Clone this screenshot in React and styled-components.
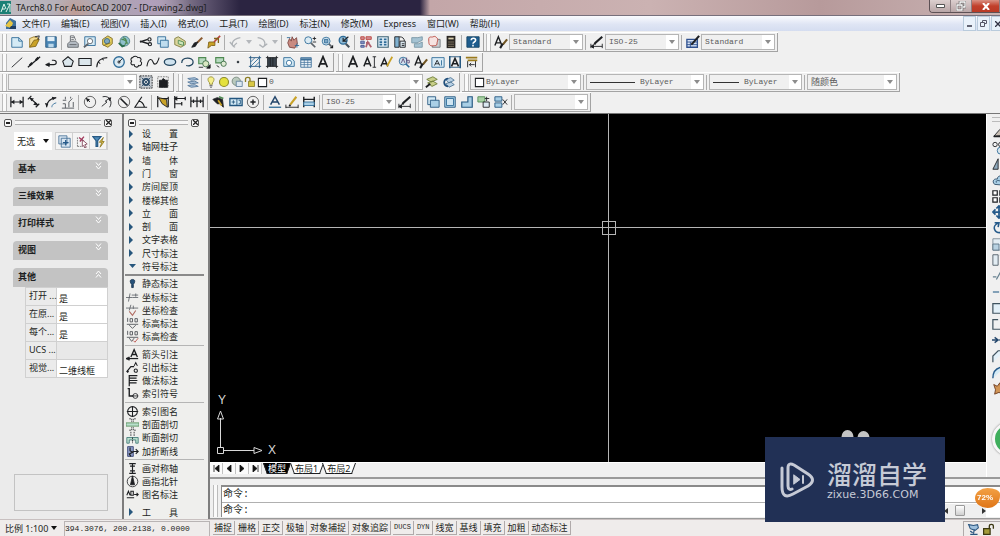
import React from 'react'
import styled, { createGlobalStyle } from 'styled-components'

const Face = "#f0f0f0";
const Edge = "#a3a3a3";
const Ink = "#1d1f22";
const Blue = "#2f6c98";
const Sky = "#a9cfe6";
const Green = "#4f8a52";
const Gold = "#c9a227";
const Red = "#b8453c";
const UiFont = `"Noto Sans", "Noto Sans CJK SC", sans-serif`;
const MonoFont = `"Liberation Mono", "Noto Sans CJK SC", monospace`;

const GlobalStyle = createGlobalStyle`
  * { box-sizing: border-box; }
  body { margin: 0; background: ${Face}; overflow: hidden; }
  button, select, input { font: inherit; color: inherit; margin: 0; padding: 0; border: 0; background: none; border-radius: 0; }
`

/* ---------- icons, all on a 16 x 16 grid ---------- */

const icons = {
  newFile: <><path d="M2 3h8l4 4v7H2z" fill="#d4eaf5" stroke={Blue} /><path d="M10 3v4h4" stroke={Blue} /></>,
  open: <><path d="M3 14V4l5-2 4 1v3" fill="#f3dc92" stroke="#9a7b2b" /><path d="M3 14l5-8 6-1-4 8z" fill={Gold} stroke="#7f641c" /><path d="M9 2l5-1-1 4" stroke={Ink} /></>,
  save: <><path d="M2 2h12v12H2z" fill="#4b86b5" stroke="#27587f" /><path d="M4 2h8v5H4z" fill="#e2eff7" stroke="none" /><path d="M5 10h6v4H5z" fill="#bcd8ea" stroke="none" /></>,
  print: <><path d="M5 7V1h4l2 5" fill="#fff" stroke="#5b6066" /><path d="M2 10l3-3h6l3 3v4H2z" fill="#b3bac2" stroke="#5b6066" /><path d="M4 11h8M6 3h3M6 5h3" stroke="#5b6066" /></>,
  preview: <><path d="M2 2h12v10H2z" fill="#d4eaf5" stroke={Blue} /><circle cx="8" cy="7" r="3" fill="#fff" stroke="#5d646b" /><path d="M6 10l-5 4" strokeWidth="2" stroke="#5d646b" /></>,
  publish: <><path d="M3 5l6-4 5 3v6l-5 4-6-3z" fill="#e5cf5f" stroke="#7f6a22" /><circle cx="8" cy="7" r="3" fill="#7fa7bd" stroke="#3b6986" /><path d="M4 12l8-3" stroke="#7f6a22" /></>,
  web: <><circle cx="9" cy="7" r="5.500" fill="#8fc0cb" stroke="#4f7f86" /><path d="M7 3c4 1 5 5 2 8M5 5c3 0 6 2 7 5" stroke={Green} strokeWidth="1.500" /><path d="M2 9l4 4 3-1" stroke="#276b4a" strokeWidth="2" /></>,
  cut: <><path d="M1 8l9-3M1 7l10 3" strokeWidth="1.600" /><circle cx="12" cy="5" r="1.800" strokeWidth="1.300" /><circle cx="12.500" cy="10.500" r="1.800" strokeWidth="1.300" /></>,
  copy: <><path d="M2 2h9v8H2z" fill="#d4eaf5" stroke={Blue} /><path d="M5 6h9v8H5z" fill="#bedcee" stroke={Blue} /></>,
  paste: <><path d="M2 4l4-2 8 5v4l-5 3-7-3z" fill="#dcd59c" stroke="#7d7a3c" /><path d="M6 6l6 2v4l-6-2z" fill="#cfe5bb" stroke={Green} /></>,
  brush: <><path d="M14 3L8 9" stroke="#8a5a2f" strokeWidth="2.400" /><path d="M9 8l-3 5-4 1 3-5z" fill={Ink} /></>,
  blockEdit: <><path d="M2 8h7v4H5l-4 3z" fill={Gold} stroke="#7f641c" /><path d="M15 1L8 8" stroke={Red} strokeWidth="2" /><path d="M8 4h5v5" stroke="#7f641c" strokeWidth="1.500" /></>,
  undo: <path d="M7 14c-5-2-5-9 6-11M1 8l4 5 4-4" stroke="#aeb2b6" strokeWidth="1.500" />,
  redo: <path d="M3 3c9 1 10 8 6 11M5 11l4 3 5-4" stroke="#aeb2b6" strokeWidth="1.500" />,
  pan: <><path d="M4 14L2 9l2-5 2 3 1-5 2 4 3-3 1 7-3 5z" fill="#c98b82" stroke="#7b4540" /><path d="M10 12h5M12.500 9.500v5M1 3h4" stroke={Blue} /></>,
  zoomRt: <><circle cx="6" cy="6" r="4" fill="#dcebf3" stroke={Blue} /><path d="M9 9l5 5" strokeWidth="2" stroke="#5d646b" /><path d="M11 4h4M13 2v4M11 8h4" /></>,
  zoomWin: <><circle cx="7" cy="7" r="4.500" fill="#dcebf3" stroke={Blue} /><path d="M5 5h4v4H5z" fill="#7fa7c4" stroke={Blue} /><path d="M10 10l3 3" strokeWidth="2" stroke="#5d646b" /><path d="M15 11v4h-4z" fill={Ink} stroke="none" /></>,
  zoomPrev: <><circle cx="7" cy="6" r="4.500" fill="#8dbad6" stroke={Blue} strokeWidth="1.500" /><path d="M10 10l4 4" strokeWidth="2.500" stroke="#46525c" /><path d="M13 2L7 7V3M7 7h4" stroke={Ink} strokeWidth="1.300" /></>,
  properties: <><path d="M2 2h4v3H2zM8 2h6v3H8z" fill="#d58d97" stroke={Red} /><path d="M2 7h4v3H2zM2 12h4v2H2z" fill="#7f8fc0" stroke="#4a5a93" /><path d="M8 14l2-6 4 6M8 9h4" stroke="#b0616e" strokeWidth="2" /></>,
  center: <><path d="M2 2h12v12H2z" fill="#deedf6" stroke="#3f6476" strokeWidth="1.300" /><path d="M4 5h3M9 5h3M4 8h3M9 8h3M4 11h3M9 11h3" stroke={Blue} strokeWidth="2" /></>,
  palettes: <><path d="M2 2h5v12H2z" fill="#7fb0cf" stroke={Ink} /><path d="M7 2c4 0 6 2 6 5" /><path d="M8 7h6v7H8z" fill="#dbe8f0" stroke={Ink} /><path d="M10 10h3M10 12h3" /></>,
  sheet: <path d="M2 3h7l5-1v4l-6 3H2zM5 10h5l4-2v6H5z" fill="#a5c3d3" stroke="#7896a5" />,
  markup: <><path d="M6 5h9v9H6z" fill="#c9ced2" stroke="#72797f" /><path d="M2 4c1-3 3-1 5-2s3 0 4 1 2 2 1 4 0 5-2 5-4 1-6 0-2-3-2-8z" stroke={Red} fill="#f6e3e1" /></>,
  calc: <><path d="M3 1h10v14H3z" fill="#2a2623" stroke="none" /><path d="M5 3h6v2H5z" fill="#d8cfae" stroke="none" /><path d="M5 8h6M5 10.500h6M5 13h6" stroke="#b9a98a" strokeDasharray="1.500 .8" /></>,
  help: <><path d="M1 2h14v12H1z" fill="#1f5d8e" stroke="#164566" /><path d="M6 6c0-3 5-3 5 0 0 2-3 2-3 4M8 11v2" stroke="#fff" strokeWidth="1.800" /></>,

  textStyle: <><path d="M1 12L5 2l4 10M2 9h6" strokeWidth="1.600" /><path d="M15 5l-5 6" stroke="#6f5320" strokeWidth="2.400" /><path d="M10 10l-3 5" strokeWidth="2.400" /></>,
  dimStyle: <><path d="M1 13h13M1 10v5M14 10v5M1 13l3-2v4z" fill={Ink} /><path d="M14 2L6 9l-1 2" strokeWidth="2.400" stroke={Ink} /></>,
  tableStyle: <><path d="M1 5h12v9H1z" fill="#d5e2f4" stroke="#30518f" strokeWidth="1.500" /><path d="M1 8h12M1 11h12M5 8v6" stroke="#30518f" /><path d="M15 1L8 9l-2 2" strokeWidth="2.400" /></>,

  line: <path d="M2 14L14 3" />,
  xline: <><path d="M1 14L15 2" strokeWidth="1.500" /><path d="M3 12l3-3M10 6l3-3" strokeWidth="2.500" /></>,
  polyline: <><path d="M2 11h9c4 0 4-5 0-5H9" strokeWidth="1.300" /><path d="M2 11l4-2v4z" fill={Ink} /></>,
  polygon: <path d="M8 2l6 5-2 6H4L2 7z" fill="#dbe6ec" strokeWidth="1.200" />,
  rect: <path d="M1 4h14v8H1z" fill="#dbe6ec" strokeWidth="1.200" />,
  arc: <path d="M2 14C2 7 7 3 14 3M4 8l2 2M8 4l2 2" strokeWidth="1.200" />,
  circle: <><circle cx="8" cy="8" r="6" stroke={Blue} fill="#dbeaf3" strokeWidth="1.500" /><path d="M8 8l4-4M6 8h4M8 6v4" /></>,
  cloud: <path d="M4 3c2-2 5-2 6 0 3-1 5 2 3 4 3 2 1 6-2 5-1 3-5 2-5-1-3 1-5-1-3-4-2-2 0-4 1-4z" strokeWidth="1.200" />,
  spline: <path d="M1 13C3 2 7 5 8 8s4 5 7-5" strokeWidth="1.200" />,
  ellipse: <ellipse cx="8" cy="8" rx="6.500" ry="3.800" fill="#cfe2ee" stroke="#23465f" strokeWidth="1.500" />,
  ellipseArc: <path d="M2 9c0-7 13-7 13-1 0 4-5 5-8 4" stroke="#23465f" strokeWidth="1.400" />,
  insertBlock: <><path d="M2 3h8v7H2z" fill="#b7d9c0" stroke={Green} strokeWidth="1.300" /><circle cx="10" cy="10" r="3.500" fill="#d9e8c4" stroke="#3b6b46" /><path d="M2 14h5M15 11v4h-4z" fill={Ink} /></>,
  makeBlock: <><path d="M2 3h9v6H2z" fill="#b7d9c0" stroke={Green} strokeWidth="1.300" /><circle cx="11" cy="10" r="3" fill="#dfe9d2" stroke="#3b6b46" /><path d="M3 12l3 2" /></>,
  point: <circle cx="8" cy="8" r="1" fill="#23465f" />,
  hatch: <><path d="M3 1v14M13 1v14M1 3h14M1 13h14" stroke="#23567f" /><path d="M3 8l5-5M3 13L13 3M8 13l5-5" stroke={Blue} /></>,
  gradient: <><path d="M3 3h10v10H3z" fill="#3b444d" stroke="none" /><path d="M3 1v14M13 1v14M1 3h14M1 13h14M6 3v10M9 3v10" stroke={Ink} /></>,
  region: <><path d="M2 3h8l4 4v6H2z" fill="#d4eaf5" stroke={Blue} /><circle cx="8" cy="9" r="3" fill="#fff" stroke={Blue} /></>,
  table: <><path d="M2 3h12v11H2z" fill="#eef4f9" stroke="#3d6f99" /><path d="M2 5h12" stroke="#3d6f99" strokeWidth="2.500" /><path d="M2 8.500h12M2 11h12M6 5v9M10 5v9" stroke="#3d6f99" strokeWidth=".8" /></>,
  letterA: <path d="M3 14L8 2l5 12M5 10h6" strokeWidth="2" />,
  textI: <><path d="M1 13L5 3l4 10M2 10h6" strokeWidth="1.600" /><path d="M11 2h4M13 2v12M11 14h4" /></>,
  textEdit: <><path d="M1 13L5 4l4 9M2 10h6" strokeWidth="1.600" /><path d="M14 2L8 13" stroke={Gold} strokeWidth="2" /></>,
  find: <><circle cx="7" cy="7" r="4.500" fill="#cfe0ec" stroke={Blue} /><path d="M10 10l4 4" strokeWidth="2" stroke={Blue} /><path d="M5 9l2-5 2 5M11 3v5M11 6h3v3h-3" stroke="#5d4a78" /></>,
  textScale: <><path d="M1 3h14v11H1z" fill="#d9ebf6" stroke={Blue} /><path d="M4 12l3-6 3 6M5 10h4" /><path d="M12 6v6" stroke={Blue} /></>,
  textJust: <><path d="M2 2h12v12H2z" stroke="#23567f" /><path d="M4 13l4-9 4 9M5 10h6" strokeWidth="1.800" /><path d="M2 1v14M14 1v14" stroke="#23567f" strokeWidth="1.500" /></>,
  spaceConv: <><path d="M1 3h13M3 6h11" stroke="#9a7a1d" strokeWidth="2" /><path d="M3 7v7M12 7v7M5 11h6M7 9l-2 2 2 2" /></>,

  gearBox: <><path d="M1 1h14v14H1z" fill="#c9ced3" stroke={Ink} strokeDasharray="2 1" /><circle cx="8" cy="8" r="3.500" stroke="#2b4a66" strokeWidth="2" /><path d="M3 3l10 10M13 3L3 13" stroke="#2b4a66" /></>,
  blackBox: <><path d="M2 2h12v12H2z" stroke="#777" strokeDasharray="2 1" /><path d="M4 6h3l1-2 3 2h2v8H4z" fill={Ink} /></>,
  layers: <path d="M2 4l8-1 4 2-8 1zM2 8l8-1 4 2-8 1zM2 12l8-1 4 2-8 1z" fill="#a7c0d8" stroke="#57799c" />,
  bulb: <><path d="M8 1c-6 1-4 6-2 8v2h4V9c2-2 4-7-2-8z" fill="#f6ef8c" stroke="#8a8227" /><path d="M6 13h4M7 15h2" /></>,
  sun: <circle cx="8" cy="8" r="6" fill="#e4e13c" stroke="#8d8b2c" strokeWidth="1.500" />,
  sunVp: <><circle cx="7" cy="7" r="5.500" fill="#b9c9bd" stroke="#67796c" /><path d="M7 7h8v7H7z" fill="#dbe7f1" stroke="#517493" /></>,
  lock: <><path d="M6 7h8v7H6z" fill="#d8c743" stroke="#7f7420" /><path d="M2 8V4c0-3 6-3 6 0v3" stroke="#8a7c22" strokeWidth="1.800" /></>,
  swatch: <path d="M2 2h12v12H2z" fill="#fff" strokeWidth="1.500" />,
  layerPrev: <><path d="M2 5l7-3 5 3-7 3zM3 9l6-2 5 3-6 3z" fill="#c8cf89" stroke="#6d7d37" /><path d="M1 14l5-4" strokeWidth="2" /></>,
  layerState: <><path d="M4 5l6-2 4 3-6 3zM4 10l6-2 4 3-6 3z" fill="#b8d0e4" stroke="#4d7393" /><path d="M7 13C1 12 1 5 7 4" stroke="#204f7c" strokeWidth="2" /></>,

  dimLinear: <><path d="M1 2v12M15 2v12M1 8h14" strokeWidth="1.400" /><path d="M1 8l4-2.500v5zM15 8l-4-2.500v5z" fill={Ink} stroke="none" /></>,
  dimAligned: <><path d="M1 5l4-4M10 14l4-4M3 3l10 9" strokeWidth="1.400" /><path d="M3 3l5 1-3 3zM12 12l-5-1 3-3z" fill={Ink} stroke="none" /></>,
  dimArc: <><path d="M3 14C3 8 7 4 14 3" strokeWidth="1.300" /><path d="M9 14c0-2 1-4 5-5" stroke={Blue} /><path d="M14 3l-5-1 1 4zM3 14l-2-5 4 1z" fill={Ink} stroke="none" /></>,
  dimOrd: <path d="M1 15h14M2 10h3v5M9 14V8l4-4M5 2v3M11 2v2M14 8v6M2 6h4" stroke="#4a4f55" />,
  dimRadius: <><circle cx="8" cy="8" r="6.500" stroke="#555" /><path d="M8 8L4 4" /><path d="M3 3l5 2-3 3z" fill={Ink} stroke="none" /></>,
  dimJog: <><path d="M3 2c8-2 12 6 8 12M2 13l6-5-2-1 6-4" /><path d="M13 3l-4 0 2 4z" fill={Ink} stroke="none" /></>,
  dimDia: <><circle cx="8" cy="8" r="6.500" stroke="#555" /><path d="M4 4l8 8" strokeWidth="1.800" /></>,
  dimAng: <path d="M15 14H1L9 2M5 7c4 0 6 3 7 7" strokeWidth="1.300" />,
  quickDim: <><path d="M2 1v13M14 2v12M2 4h12" strokeWidth="1.400" /><path d="M3 3l9 2 1 9-6-4z" fill={Gold} stroke={Ink} /></>,
  baseDim: <path d="M2 1v14M2 4h12M14 2v4M2 10h8M10 8v4M5 2L2 4l3 2" strokeWidth="1.400" />,
  contDim: <path d="M1 2v12M8 2v12M15 2v12M1 7h14M4 5v4M12 5v4" strokeWidth="1.400" />,
  leader: <><path d="M1 5l5-2 6 2 1 9-4-4-3 0z" fill={Ink} /><path d="M7 6l4 6" stroke={Gold} strokeWidth="2" /><path d="M8 2l5 2" stroke={Green} strokeWidth="2" /></>,
  tolerance: <><path d="M1 4h14v8H1z" fill="#d4eaf5" stroke="#23567f" strokeWidth="1.500" /><path d="M9 4v8M3 8h4M5 6v4M11 6h2v4h-2" stroke="#23567f" /></>,
  centerMark: <><circle cx="8" cy="8" r="6.500" stroke="#555" /><path d="M5 8h6M8 5v6" strokeWidth="1.600" /></>,
  dimText: <><path d="M3 11L8 2l5 9M5 8h6" strokeWidth="1.700" stroke="#23466b" /><path d="M1 14h14" stroke={Blue} strokeWidth="1.500" /></>,
  dimEdit: <><path d="M1 14h14M1 11v4M15 11v4" /><path d="M13 2L6 11" stroke={Gold} strokeWidth="2.400" /><path d="M6 11l-1 2" strokeWidth="2" /></>,
  dimUpdate: <><path d="M2 2v12M14 2v12M2 5h12" strokeWidth="1.600" /><path d="M2 8h12v4H2z" fill={Sky} stroke={Blue} /></>,

  vp1: <><path d="M2 2h9v9H2z" fill="#d4eaf5" stroke="#23567f" /><path d="M5 6h10v8H5z" fill={Sky} stroke="#23567f" /></>,
  vp2: <><path d="M2 2h12v12H2z" fill={Sky} stroke="#23567f" /><path d="M4 4h8v8H4z" fill="#cfe5f2" stroke={Blue} /></>,
  vp3: <path d="M9 2h5v12H2V8h7z" fill={Sky} stroke="#23567f" strokeWidth="1.300" />,
  vp4: <><path d="M1 2h8v6H1z" fill="#a9d1a4" stroke={Green} /><path d="M7 8h7v6H7z" fill="#dce9f2" stroke={Ink} /><path d="M11 2v5M9 4h5" /></>,
  vp5: <><path d="M1 2h8v5H1zM1 9h8v5H1z" fill={Sky} stroke="#23567f" /><path d="M10 5l5 6M10 11l5-6" /></>,

  erase: <><path d="M2 13l7-8 6 2v5z" fill="#c9beb3" /><path d="M2 13h8" strokeWidth="2" /></>,
  copyObj: <><circle cx="3.500" cy="4" r="2.500" /><circle cx="10" cy="4" r="2.500" /><circle cx="10" cy="11" r="4" fill="#dbe6ec" stroke={Blue} /></>,
  mirror: <><path d="M7 2v12H1z" fill="#8fa9bc" /><path d="M10 2v12h5z" fill={Sky} /></>,
  offset: <path d="M3 13c-4-4 0-7 3-6 0-5 8-5 9 0v7zM5 11c-1-2 1-3 4-2" fill={Sky} stroke="#2b4a66" />,
  array: <path d="M1 2h5v5H1zM9 2h5v5H9zM1 10h5v5H1zM9 10h5v5H9z" fill="#fff" strokeWidth="1.400" />,
  move: <path d="M8 1v14M1 8h14M5 4l3-3 3 3M5 12l3 3 3-3M4 5L1 8l3 3" stroke="#255a8a" strokeWidth="2" />,
  rotate: <path d="M8 2C-1 5 2 15 12 13M3 2l5 0-1 5" stroke="#255a8a" strokeWidth="1.800" />,
  scale: <><path d="M1 2h14v13H1z" fill="#e3edf3" stroke="#7b8a96" /><path d="M1 8h7v7H1z" fill="#b8d2e2" stroke="#5d7485" /></>,
  stretch: <path d="M1 2h6v12H1zM9 3l5 4v7" fill="#e3edf3" stroke="#4c5864" />,
  trim: <path d="M1 9h4M5 12L10 3M10 8h5" stroke="#66808f" strokeWidth="1.400" />,
  extend: <path d="M1 8h7M9 8h2M13 8h3" stroke="#5f87a5" strokeWidth="1.500" />,
  breakAt: <path d="M1 3h14v11H1z" fill="#e3f0f8" stroke="#40535f" strokeWidth="1.400" />,
  breakObj: <path d="M7 3H1v11h14V9" stroke="#40535f" strokeWidth="1.400" />,
  join: <path d="M0 8h6M3 5l4 3-4 3M9 8h7M12 5L9 8l3 3" strokeWidth="1.600" stroke="#23466b" />,
  chamfer: <path d="M1 15V8l6-6h8" fill="#e3f0f8" stroke="#40535f" strokeWidth="1.400" />,
  fillet: <path d="M1 15C1 7 5 2 15 2" fill="#d4eaf5" stroke="#255a8a" strokeWidth="1.600" />,
  explode: <path d="M2 4l4 2 3-4 1 5 5 1-4 3 1 4-4-2-5 2 1-5z" fill="#d09455" stroke="#6b3b20" />,

  addSet: <><path d="M1 1h10v10H1zM4 4h11v11H4z" fill="#d9e6f2" stroke="#3f6b93" /><path d="M9.500 6v7M6 9.500h7" stroke="#255a8a" strokeWidth="1.600" /></>,
  pick: <><path d="M3 14V3M3 14h5" stroke="#666" strokeDasharray="2 1" /><path d="M5 3l6 5M11 2L6 8" stroke="#a2395c" strokeWidth="1.600" /><path d="M9 6l6 5-3 1 2 3-2 1-1-3-2 1z" fill="#fff" stroke="#7a3a4f" /></>,
  filter: <><path d="M1 2h10L7 7v7H5V7z" fill="#4e8ab8" stroke="#275a85" strokeWidth="1.500" /><path d="M14 3l-5 6h3l-2 6 5-7h-3z" fill="#e3c84b" stroke="#8d7620" /></>,

  pin: <path d="M8 3C4 3 5 7 7 9v4h2V9c2-2 3-6-1-6z" fill="#27527a" stroke="#14304a" />,
  coord: <path d="M0 8h8M5 3l-2 10M7 5h8M8 8h7M12 3v4" stroke="#5a5f65" />,
  coordChk: <><path d="M0 5h15M6 1L4 8M9 2v4" stroke="#5a5f65" /><path d="M4 9l4 5 4-6" stroke="#b06a60" strokeWidth="1.300" /></>,
  level: <path d="M2 1v5M5 2h3v4H5zM11 2h3v4h-3zM1 9h14M4 10l4 4 4-4" stroke="#44484d" />,
  levelChk: <><path d="M2 1v5M5 2h3v4H5zM11 2h3v4h-3zM1 9h14M4 10l3 4 3-4" stroke="#44484d" /><path d="M9 13l2 2 4-5" stroke={Red} /></>,
  arrowA: <><path d="M6 11l4-9 4 9M7 8h6" strokeWidth="1.600" /><path d="M0 13h15" strokeWidth="1.500" /><path d="M0 13l4-2v4z" fill={Ink} /></>,
  leadOut: <><path d="M1 13l5-6h4" strokeWidth="1.500" /><circle cx="2" cy="13" r="1" fill={Ink} /><path d="M10 6l2-4 2 4M10 12c0-3 4-3 4 0s-4 2-4 0z" strokeWidth="1.300" /></>,
  method: <path d="M4 15V2h10M4 5h9M4 8h10M4 11h9" strokeWidth="1.500" />,
  indexSym: <><path d="M2 2h2v9h5" strokeWidth="1.700" /><circle cx="11.500" cy="11" r="3" /><path d="M8 11h7" /></>,
  indexName: <><circle cx="8" cy="8" r="6" strokeWidth="1.300" /><path d="M1 8h14M8 2v12" strokeWidth="1.300" /></>,
  section: <><path d="M0 6h16v4H0z" fill="#b9dfcd" stroke={Green} /><path d="M4 1h3v4M12 1H9v4M4 15h3v-4M12 15H9v-4" strokeDasharray="2 1" /></>,
  breakSec: <><path d="M1 15V8h14v7h-3v-4H4v4z" fill="#b9dfcd" stroke="#3b7472" /><path d="M6 1v5M10 1v5M8 8v7" strokeDasharray="2 1" /></>,
  zigzag: <><path d="M2 2h7v12H2z" fill="#8d9bc7" stroke="#2d3a6c" /><path d="M5 3v4l3 2-4 2 2 3M8 8h7M12 5l3 3-3 3" strokeWidth="1.400" /></>,
  axis: <path d="M4 2h8M8 2v12M4 14h8M5 5h6M5 11h6" strokeWidth="1.400" />,
  north: <><circle cx="8" cy="8" r="6.500" /><path d="M8 1l2.500 11H5.500z" fill={Ink} /></>,
  figName: <path d="M1 9l2-5 2 5M6 4h3v5H6zM1 12h9M10 8h5M13 6l2 2-2 2" strokeWidth="1.300" />,

  comm: <><path d="M2 2l6 1 5-1 1 4-4 3-6-2z" fill="#9fc0dd" stroke="#2b5680" strokeWidth="1.300" /><path d="M9 8l-1 5M4 14h9M4 10l3 2" stroke="#2b5680" strokeWidth="1.500" /></>,
  trayLock: <><path d="M2 7h8v7H2z" fill="#a39b3a" stroke="#3c3812" strokeWidth="1.500" /><path d="M9 7V4c0-3 5-3 5 0v3" strokeWidth="1.600" stroke="#3c3812" /></>,
}

const Glyph = styled.svg`
  display: block;
  flex: none;
  width: ${p => p.$size}px;
  height: ${p => p.$size}px;
`

const Icon = ({ name, size = 14 }) => (
  <Glyph $size={size} viewBox="0 0 16 16" fill="none" stroke={Ink} aria-hidden="true">{icons[name]}</Glyph>
)

/* ---------- window frame ---------- */

const Window = styled.div`
  display: flex;
  flex-direction: column;
  height: 100vh;
  min-height: 480px;
  background: ${Face};
  color: ${Ink};
  font: 9px/13px ${UiFont};
  overflow: hidden;
`

const TitleBar = styled.header`
  display: flex;
  flex: none;
  align-items: center;
  gap: 5px;
  height: 16px;
  border-bottom: 1px solid #77707c;
  background:
    radial-gradient(circle at 75px 12px, #c98f7a88, transparent 22px),
    radial-gradient(circle at 150px 4px, #b7a1c4aa, transparent 40px),
    linear-gradient(90deg, #bfbcc2 0, #a79daa 16%, #665c76 20%, #2b2441 24%, #2b2441 42%, #c3a6a8 43%, #cbb2b2 65%, #b79a9b 82%, #c9b3b3 100%);
`

const AppBadge = styled.span`
  display: flex;
  align-items: center;
  justify-content: center;
  width: 11px;
  height: 13px;
  background: #1c8076;
`

const Title = styled.h1`
  flex: 1;
  margin: 0;
  font: 400 9px/14px "Noto Sans", sans-serif;
  white-space: nowrap;
`

const FrameButtons = styled.div`
  display: flex;
  align-self: flex-start;
  height: 13px;
  border: 1px solid #5d5155;
  border-width: 0 0 1px 1px;
  border-radius: 0 0 0 4px;
  overflow: hidden;
`

const FrameButton = styled.button`
  display: flex;
  align-items: center;
  justify-content: center;
  width: ${p => (p.$close ? 28 : 21)}px;
  border-right: 1px solid #8d7f82;
  background: ${p => (p.$close ? "linear-gradient(#d99284, #c1402b 50%, #b93a26)" : "linear-gradient(#dccfcf, #b9a6a7)")};
`

const MenuBar = styled.nav`
  display: flex;
  flex: none;
  align-items: center;
  gap: 5px;
  height: 15px;
  padding-left: 5px;
  background: linear-gradient(#fafbfe, #dfe5f4 55%, #d5ddf0);
`

const MenuList = styled.div`
  display: flex;
  gap: 11px;
`

const MenuItem = styled.button`
  line-height: 14px;
  white-space: nowrap;
`

const MdiButtons = styled.div`
  display: flex;
  align-self: stretch;
  margin-left: auto;
  margin-right: -4px;
`

const MdiButton = styled.button`
  display: flex;
  align-items: center;
  justify-content: center;
  width: 13px;
  margin-left: 1px;
  border: 1px solid #b9cbdc;
  background: #e9f1fa;
`

/* ---------- toolbars ---------- */

const ToolArea = styled.div`
  flex: none;
  padding-top: 2px;
  border-bottom: 1px solid #777;
`

const ToolRow = styled.div`
  display: flex;
  gap: ${p => (p.$spaced ? 2 : 0)}px;
  height: 20px;
`

const Bar = styled.div`
  display: flex;
  align-items: center;
  height: 19px;
  padding: 0 2px;
  border: 1px solid ${Edge};
  border-width: 0 1px 1px 0;
  box-shadow: 0 -1px #fff;
`

const Grip = styled.span`
  width: 5px;
  height: 17px;
  margin-right: 1px;
  border: 1px solid #bcbcbc;
  border-width: 0 1px;
  background: #fafafa;
`

const ToolButton = styled.button`
  display: flex;
  align-items: center;
  justify-content: center;
  width: ${p => (p.$narrow ? 9 : 17)}px;
  height: 16px;
`

const Separator = styled.span`
  width: 1px;
  height: 15px;
  margin: 0 2px;
  background: #adadad;
`

const ComboBox = styled.span`
  display: flex;
  align-items: center;
  gap: 1px;
  width: ${p => p.$width}px;
  height: 16px;
  border: 1px solid #b5b5b5;
  background: #f0f0f0;
  color: #5a5a5a;
  font: 8px/14px ${p => (p.$cjk ? UiFont : MonoFont)};
  font-size: ${p => (p.$cjk ? 9 : 8)}px;
  padding-left: 3px;
`

const Select = styled.select`
  flex: 1;
  min-width: 0;
  height: 14px;
  appearance: none;
  outline: none;
`

const ArrowCell = styled.span`
  display: flex;
  align-items: center;
  justify-content: center;
  width: 12px;
  height: 14px;
  background: ${p => (p.$dark ? "none" : "#fff")};
`

const LineSample = styled.span`
  width: ${p => p.$width}px;
  height: 1px;
  margin-right: 4px;
  background: #333;
`

const Down = ({ color = "#8c8c8c" }) => (
  <svg width="6" height="4" viewBox="0 0 6 4" aria-hidden="true"><path d="M0 0h6L3 4z" fill={color} /></svg>
)

const Combo = ({ label, value = "", width, cjk, children }) => (
  <ComboBox $width={width} $cjk={cjk}>
    {children}
    <Select aria-label={label} defaultValue={value}>
      <option>{value}</option>
    </Select>
    <ArrowCell><Down /></ArrowCell>
  </ComboBox>
)

/* "|" is a separator, "v" the small arrow after undo and redo */
const Tools = ({ items }) => items.split(" ").map((item, i) => {
  if (item === "|") return <Separator key={i} />
  if (item === "v") return <ToolButton key={i} $narrow aria-label="list"><Down color="#b4b7bb" /></ToolButton>
  return <ToolButton key={i} aria-label={item}><Icon name={item} /></ToolButton>
})

/* ---------- docked panels ---------- */

const Main = styled.main`
  display: flex;
  flex: 1;
  min-height: 0;
`

const PropsPanel = styled.aside`
  display: flex;
  flex: none;
  flex-direction: column;
  width: 122px;
  padding: 4px 14px 8px 13px;
  background: #ebebeb;
`

const PanelHead = styled.div`
  display: flex;
  flex: none;
  align-items: center;
  gap: 3px;
  height: 9px;
  margin: ${p => (p.$wide ? "0 -4px 9px -9px" : "0 5px 0 3px")};
`

const HeadButton = styled.button`
  display: flex;
  align-items: center;
  justify-content: center;
  width: 8px;
  height: 8px;
  border: 1px solid #555;
  border-radius: 2px;
  background: #f8f8f8;
`

const HeadGrip = styled.span`
  flex: 1;
  height: 5px;
  border: 1px solid #b3b3b3;
  border-width: 1px 0;
  background: #f7f7f7;
`

const PickRow = styled.div`
  display: flex;
  flex: none;
  justify-content: space-between;
  height: 18px;
  margin: -4px 0 10px;
`

const PickBox = styled.span`
  display: flex;
  align-items: center;
  width: 38px;
  padding-left: 3px;
  margin-left: 1px;
  background: #fff;
`

const PickButtons = styled.div`
  display: flex;
  border: 1px solid #cfcfcf;
  background: #f4f4f4;
`

const PickButton = styled.button`
  display: flex;
  align-items: center;
  justify-content: center;
  width: 17px;
  border-right: 1px solid #cfcfcf;
`

const SectionHead = styled.button`
  display: flex;
  flex: none;
  justify-content: space-between;
  height: 19px;
  padding: 2px 6px 0 5px;
  margin-bottom: ${p => (p.$open ? 0 : 8)}px;
  border-radius: 4px 4px 0 0;
  background: #c3c3c3;
  font-weight: 700;
`

const PropTable = styled.table`
  width: 83px;
  margin-left: 12px;
  border-collapse: collapse;
  table-layout: fixed;
`

const PropName = styled.th`
  width: 31px;
  height: 18px;
  padding: 0 0 2px 3px;
  border: 1px solid #d0d0d0;
  font-weight: 400;
  line-height: 13px;
  text-align: left;
  white-space: nowrap;
`

const PropValue = styled.td`
  padding: 3px 0 0 2px;
  border: 1px solid #d0d0d0;
  background: ${p => (p.$off ? "#e8e8e8" : "#fff")};
  line-height: 13px;
  white-space: nowrap;
`

const HintBox = styled.div`
  height: 37px;
  margin-top: auto;
  margin-left: 1px;
  border: 1px solid #c3c3c3;
`

const TArchPanel = styled.aside`
  display: flex;
  flex: none;
  flex-direction: column;
  width: 88px;
  padding: 4px 4px 0 1px;
  border: 2px solid #7d7d7d;
  border-width: 0 2px;
  background: #efefed;
`

const TArchItem = styled.button`
  display: flex;
  flex: 1;
  align-items: center;
  min-height: 0;
  gap: 3px;
  text-align: left;
`

const TArchMark = styled.span`
  display: flex;
  align-items: center;
  justify-content: ${p => (p.$arrow ? "flex-start" : "center")};
  width: 14px;
  height: 12px;
  padding-left: ${p => (p.$arrow ? 4 : 0)}px;
`

const TArchLabel = styled.span`
  display: flex;
  justify-content: space-between;
  width: 36px;
  line-height: 13px;
  white-space: nowrap;
`

const TArchRule = styled.span`
  flex: none;
  height: ${p => (p.$strong ? 2 : 1)}px;
  margin: ${p => (p.$strong ? "1px 0" : "1px 0 2px")};
  background: ${p => (p.$strong ? "#8a8a8a" : p.$blank ? "none" : "#b5b5b5")};
`

/* ---------- drawing area ---------- */

const Work = styled.section`
  display: flex;
  flex: 1;
  flex-direction: column;
  min-width: 0;
`

const WorkRow = styled.div`
  display: flex;
  flex: 1;
  min-height: 0;
`

const Sheet = styled.div`
  display: flex;
  flex: 1;
  flex-direction: column;
  min-width: 0;
`

const Canvas = styled.div`
  position: relative;
  flex: 1;
  background: #000;
  overflow: hidden;
`

const Crosshair = styled.div`
  position: absolute;
  left: ${p => p.$x}px;
  top: ${p => p.$y}px;
  width: 14px;
  height: 14px;
  border: 1px solid #b5b5b5;
  &::before, &::after {
    content: "";
    position: absolute;
    background: #b5b5b5;
  }
  &::before { left: -2000px; right: -2000px; top: 5px; height: 1px; }
  &::after { top: -2000px; bottom: -2000px; left: 5px; width: 1px; }
`

const Ucs = styled.div`
  position: absolute;
  left: 4px;
  bottom: 5px;
  display: grid;
  grid-template-columns: 48px 14px;
  grid-template-rows: 15px 48px;
  color: #d8d8d8;
  font: 12px/13px "Liberation Sans", sans-serif;
`

const UcsX = styled.span`
  align-self: end;
  padding-left: 6px;
`

const UcsY = styled.span`
  grid-column: 1 / 3;
  padding-left: 4px;
`

const TabStrip = styled.div`
  display: flex;
  flex: none;
  height: 15px;
  border-top: 1px solid #fff;
`

const TabNav = styled.button`
  display: flex;
  align-items: center;
  justify-content: center;
  width: 13px;
  height: 11px;
  border-right: 1px solid #c2c2c2;
  background: #fbfbfb;
`

const Tab = styled.button`
  height: 11px;
  padding: 0 3px;
  margin-left: 3px;
  font: 9px/10px ${UiFont};
  color: ${p => (p.$active ? "#fff" : Ink)};
  position: relative;
  z-index: 0;
  white-space: nowrap;
  &::before, &::after {
    content: "";
    position: absolute;
    inset: 0;
    z-index: -1;
    border: 1px solid ${Ink};
    border-top: 0;
    background: ${p => (p.$active ? "#000" : "#fff")};
  }
  &::before { right: 50%; border-right: 0; transform: skewX(20deg); }
  &::after { left: 40%; border-left: 0; transform: skewX(-20deg); }
`

const ModifyBar = styled.aside`
  display: flex;
  flex: none;
  flex-direction: column;
  width: 14px;
  padding-left: 5px;
  border-left: 1px solid #fff;
  overflow: hidden;
`

const ModifyGrip = styled.span`
  flex: none;
  height: 5px;
  margin: 3px 0 2px;
  border: 1px solid #bbb;
  border-width: 1px 0;
`

const ModifyButton = styled.button`
  flex: none;
  width: 16px;
  height: 16px;
`

const CommandDock = styled.div`
  display: flex;
  flex: none;
  height: 42px;
  padding: 6px 0 1px 3px;
  border: 2px solid #9a9a9a;
  border-width: 2px 0 1px;
`

const CommandGrip = styled(Grip)`
  height: 32px;
`

const CommandLines = styled.div`
  flex: 1;
  margin-left: 2px;
  border: 1px solid #8a8a8a;
  border-width: 2px 0 0 1px;
  background: #fff;
  font: 10px/16px ${MonoFont};
`

const CommandLog = styled.div`
  height: 16px;
  padding-left: 1px;
  border-bottom: 1px solid #b0b0b0;
`

const CommandEntry = styled.label`
  display: flex;
  align-items: center;
  height: 15px;
  padding-left: 1px;
  line-height: 14px;
`

const CommandInput = styled.input`
  flex: 1;
  min-width: 0;
  outline: none;
`

const ScrollBar = styled.span`
  display: flex;
  align-items: center;
  justify-content: space-between;
  width: 42px;
  height: 13px;
  margin-right: 14px;
  background: #efefef;
`

const Thumb = styled.span`
  width: 10px;
  height: 11px;
  margin-right: 10px;
  border: 1px solid #9a9a9a;
  border-radius: 1px;
  background: linear-gradient(#fff, #cfcfcf);
`

/* ---------- status bar ---------- */

const StatusBar = styled.footer`
  display: flex;
  flex: none;
  align-items: center;
  height: 17px;
  border-top: 1px solid #c8c0c0;
  background: #efeceb;
`

const ScaleButton = styled.button`
  display: flex;
  align-items: center;
  gap: 3px;
  width: 64px;
  padding-left: 5px;
  white-space: nowrap;
`

const Coords = styled.output`
  width: 146px;
  height: 15px;
  margin-right: 3px;
  border: 1px solid #b9b4b4;
  border-width: 1px 1px 0 1px;
  font: 8px/14px ${MonoFont};
  white-space: nowrap;
`

const Toggle = styled.button`
  height: 14px;
  padding: 0 2px 0 1px;
  margin-right: 2px;
  border: 1px solid #b0aaaa;
  border-width: 0 1px 1px 0;
  font: 9px/13px ${p => (p.$mono ? MonoFont : UiFont)};
  font-size: ${p => (p.$mono ? 7 : 9)}px;
  white-space: nowrap;
`

const Tray = styled.div`
  display: flex;
  gap: 2px;
  width: 37px;
  margin-left: auto;
  padding: 1px 0 0 3px;
  border: 1px solid #b0aaaa;
  border-width: 1px 0 0 1px;
`

/* ---------- floating things ---------- */

const Watermark = styled.div`
  position: fixed;
  right: 55px;
  bottom: 14px;
  display: flex;
  align-items: center;
  gap: 12px;
  width: 180px;
  height: 85px;
  padding-left: 14px;
  background: #213055;
  color: #c6cad6;
`

const WatermarkText = styled.div`
  display: flex;
  flex-direction: column;
  gap: 2px;
`

const WatermarkName = styled.div`
  font: 500 25px/28px "Noto Sans CJK SC", sans-serif;
  white-space: nowrap;
`

const WatermarkUrl = styled.div`
  font: 11px/12px "DejaVu Sans", sans-serif;
  white-space: nowrap;
`

const Ears = styled.svg`
  position: fixed;
  right: 129px;
  bottom: 99px;
`

const GreenBall = styled.span`
  position: fixed;
  right: -26px;
  bottom: 80px;
  width: 34px;
  height: 34px;
  border: 3px solid #f7f7f7;
  border-radius: 50%;
  background: #3fae5c;
  box-shadow: 0 0 2px #777;
`

const Percent = styled.span`
  position: fixed;
  right: 0;
  bottom: 28px;
  display: flex;
  align-items: center;
  width: 25px;
  height: 20px;
  padding-left: 2px;
  background: linear-gradient(#f3a145, #df7517);
  border-radius: 50% 50% 50% 50% / 50% 30% 60% 50%;
  color: #fff;
  font: 700 8px/20px "Liberation Sans", sans-serif;
`

const menus = ["文件(F)", "编辑(E)", "视图(V)", "插入(I)", "格式(O)", "工具(T)", "绘图(D)", "标注(N)", "修改(M)", "Express", "窗口(W)", "帮助(H)"]

const tarchGroups = [
  [["right", "设 置"], ["right", "轴网柱子"], ["right", "墙 体"], ["right", "门 窗"], ["right", "房间屋顶"], ["right", "楼梯其他"], ["right", "立 面"], ["right", "剖 面"], ["right", "文字表格"], ["right", "尺寸标注"], ["down", "符号标注"]],
  [["pin", "静态标注"], ["coord", "坐标标注"], ["coordChk", "坐标检查"], ["level", "标高标注"], ["levelChk", "标高检查"]],
  [["arrowA", "箭头引注"], ["leadOut", "引出标注"], ["method", "做法标注"], ["indexSym", "索引符号"]],
  [["indexName", "索引图名"], ["section", "剖面剖切"], ["breakSec", "断面剖切"], ["zigzag", "加折断线"]],
  [["axis", "画对称轴"], ["north", "画指北针"], ["figName", "图名标注"]],
  [["right", "工 具"]],
]

const properties = [["打开 ...", "是"], ["在原...", "是"], ["每个...", "是"], ["UCS ...", ""], ["视觉...", "二维线框"]]

const modifyTools = ["erase", "copyObj", "mirror", "offset", "array", "move", "rotate", "scale", "stretch", "trim", "extend", "breakAt", "breakObj", "join", "chamfer", "fillet", "explode"]

const toggles = ["捕捉", "栅格", "正交", "极轴", "对象捕捉", "对象追踪", "DUCS", "DYN", "线宽", "基线", "填充", "加粗", "动态标注"]

const Chevron = ({ up }) => (
  <svg width="7" height="8" viewBox="0 0 7 8" fill="none" stroke="#fff" aria-hidden="true">
    <path d={up ? "M1 4l2.500-3L6 4M1 7.500l2.500-3 2.500 3" : "M1 .5l2.500 3L6 .5M1 4l2.500 3L6 4"} />
  </svg>
)

const DockHead = ({ wide }) => (
  <PanelHead $wide={wide}>
    <HeadButton aria-label="collapse"><svg width="4" height="2"><path d="M0 1h4" stroke="#222" strokeWidth="2" /></svg></HeadButton>
    <HeadGrip />
    <HeadButton aria-label="close"><svg width="5" height="5"><path d="M0 0l5 5M5 0L0 5" stroke="#222" strokeWidth="1.300" /></svg></HeadButton>
  </PanelHead>
)

const Mark = ({ kind }) => {
  if (kind === "right") return <TArchMark $arrow><svg width="4" height="8"><path d="M0 0l4 4-4 4z" fill="#27577d" /></svg></TArchMark>
  if (kind === "down") return <TArchMark $arrow><svg width="7" height="4"><path d="M0 0h7L3.500 4z" fill="#27577d" /></svg></TArchMark>
  return <TArchMark><Icon name={kind} size={13} /></TArchMark>
}

const Toolbars = () => (
  <ToolArea>
    <ToolRow>
      <Bar><Grip /><Tools items="newFile open save | print preview publish web | cut copy paste brush blockEdit | undo v redo v | pan zoomRt zoomWin zoomPrev | properties center palettes sheet markup calc | help" /></Bar>
      <Bar>
        <Grip />
        <Tools items="textStyle" /><Combo label="文字样式" value="Standard" width={74} />
        <Tools items="| dimStyle" /><Combo label="标注样式" value="ISO-25" width={74} />
        <Tools items="| tableStyle" /><Combo label="表格样式" value="Standard" width={74} />
      </Bar>
    </ToolRow>
    <ToolRow $spaced>
      <Bar><Grip /><Tools items="line xline polyline polygon rect arc circle cloud spline ellipse ellipseArc insertBlock makeBlock point hatch gradient region table letterA" /></Bar>
      <Bar><Grip /><Tools items="letterA textI textEdit find textStyle textScale textJust spaceConv" /></Bar>
    </ToolRow>
    <ToolRow $spaced>
      <Bar><Grip /><Combo label="工作空间" width={129} /><Tools items="gearBox blackBox" /></Bar>
      <Bar>
        <Grip /><Tools items="layers" />
        <Combo label="图层" value="0" width={222}>
          <Icon name="bulb" size={12} /><Icon name="sun" size={12} /><Icon name="sunVp" size={12} /><Icon name="lock" size={12} /><Icon name="swatch" size={11} />
        </Combo>
        <Tools items="layerPrev layerState" />
      </Bar>
      <Bar>
        <Grip />
        <Combo label="颜色" value="ByLayer" width={111}><Icon name="swatch" size={11} /></Combo><Separator />
        <Combo label="线型" value="ByLayer" width={118}><LineSample $width={45} /></Combo><Separator />
        <Combo label="线宽" value="ByLayer" width={93}><LineSample $width={26} /></Combo><Separator />
        <Combo label="打印样式" value="随颜色" width={90} cjk />
      </Bar>
    </ToolRow>
    <ToolRow>
      <Bar>
        <Grip /><Tools items="dimLinear dimAligned dimArc dimOrd | dimRadius dimJog dimDia dimAng | quickDim baseDim contDim | leader tolerance centerMark | dimText dimEdit dimUpdate |" />
        <Combo label="当前标注样式" value="ISO-25" width={74} /><Tools items="dimStyle" />
      </Bar>
      <Bar><Grip /><Tools items="vp1 vp2 vp3 vp4 vp5 |" /><Combo label="视口比例" width={74} /></Bar>
    </ToolRow>
  </ToolArea>
)

const Properties = () => (
  <PropsPanel>
    <DockHead wide />
    <PickRow>
      <PickBox>
        <Select aria-label="选择" defaultValue="无选"><option>无选</option></Select>
        <ArrowCell $dark><Down color="#111" /></ArrowCell>
      </PickBox>
      <PickButtons>
        {["addSet", "pick", "filter"].map(name => <PickButton key={name} aria-label={name}><Icon name={name} size={13} /></PickButton>)}
      </PickButtons>
    </PickRow>
    {["基本", "三维效果", "打印样式", "视图"].map(name => <SectionHead key={name}>{name}<Chevron /></SectionHead>)}
    <SectionHead $open>其他<Chevron up /></SectionHead>
    <PropTable>
      <tbody>
        {properties.map(([name, value]) => (
          <tr key={name}>
            <PropName scope="row">{name}</PropName>
            <PropValue $off={!value}>{value}</PropValue>
          </tr>
        ))}
      </tbody>
    </PropTable>
    <HintBox />
  </PropsPanel>
)

const TArch = () => (
  <TArchPanel>
    <DockHead />
    {tarchGroups.map((group, i) => (
      <React.Fragment key={i}>
        {i > 0 && <TArchRule $strong={i === 1} $blank={i === 5} />}
        {group.map(([kind, label]) => (
          <TArchItem key={label}>
            <Mark kind={kind} />
            <TArchLabel>{label.split(" ").map(part => <span key={part}>{part}</span>)}</TArchLabel>
          </TArchItem>
        ))}
      </React.Fragment>
    ))}
  </TArchPanel>
)

const navArrows = ["M1 0v7M6 0v7L2 3.500z", "M5 0v7L1 3.500z", "M1 0v7l4-3.500z", "M1 0v7l4-3.500zM6 0v7"]

const Drawing = () => (
  <Work>
    <WorkRow>
      <Sheet>
        <Canvas>
          <Crosshair $x={392} $y={107} />
          <Ucs>
            <UcsY>Y</UcsY>
            <svg width="48" height="48" fill="none" stroke="#d8d8d8" aria-hidden="true">
              <path d="M3.500 38.500h6v6h-6zM6.500 38.500V9M9.500 41.500H40M6.500 2l3 8h-6zM48 41.500l-8-3v6z" />
            </svg>
            <UcsX>X</UcsX>
          </Ucs>
        </Canvas>
        <TabStrip>
          {navArrows.map(d => <TabNav key={d} aria-label="tab"><svg width="7" height="7"><path d={d} fill="#111" stroke="#111" strokeWidth=".8" /></svg></TabNav>)}
          <Tab $active>模型</Tab>
          <Tab>布局1</Tab>
          <Tab>布局2</Tab>
        </TabStrip>
      </Sheet>
      <ModifyBar>
        <ModifyGrip />
        {modifyTools.map(name => <ModifyButton key={name} aria-label={name}><Icon name={name} /></ModifyButton>)}
      </ModifyBar>
    </WorkRow>
    <CommandDock>
      <CommandGrip />
      <CommandLines>
        <CommandLog>命令:</CommandLog>
        <CommandEntry>
          命令:<CommandInput />
          <ScrollBar>
            <svg width="4" height="6"><path d="M4 0v6L0 3z" fill="#333" /></svg>
            <Thumb />
            <svg width="4" height="6"><path d="M0 0v6l4-3z" fill="#333" /></svg>
          </ScrollBar>
        </CommandEntry>
      </CommandLines>
    </CommandDock>
  </Work>
)

export default function App() {
  return (
    <Window>
      <GlobalStyle />
      <TitleBar>
        <AppBadge>
          <svg width="11" height="13" viewBox="0 0 11 13" fill="none" stroke="#e5f5ee"><path d="M1 11L4 3l2 5M2 8h3M6 11l4-8M7 3h3v8" /></svg>
        </AppBadge>
        <Title>TArch8.0 For AutoCAD 2007 - [Drawing2.dwg]</Title>
        <FrameButtons>
          <FrameButton aria-label="minimize"><svg width="9" height="4"><path d="M.5.5h8v3h-8z" fill="#fff" stroke="#555" /></svg></FrameButton>
          <FrameButton aria-label="restore">
            <svg width="10" height="10" fill="none"><path d="M4 3V1h5v5H7M1 4h5v5H1z" stroke="#555" strokeWidth="2.500" /><path d="M4 3V1h5v5H7M1 4h5v5H1z" stroke="#fff" strokeWidth="1.300" /></svg>
          </FrameButton>
          <FrameButton $close aria-label="close"><svg width="8" height="7"><path d="M1 0l6 7M7 0L1 7" stroke="#fff" strokeWidth="2" /></svg></FrameButton>
        </FrameButtons>
      </TitleBar>
      <MenuBar>
        <svg width="12" height="13" viewBox="0 0 12 13" aria-hidden="true">
          <path d="M1 6l4-5 6 3v8H1z" fill="#3e6f9a" /><path d="M0 9l5-6 3 3-2 5z" fill="#e6c443" /><path d="M6 9h5v3H4z" fill="#1f3d63" />
        </svg>
        <MenuList>
          {menus.map(name => <MenuItem key={name}>{name}</MenuItem>)}
        </MenuList>
        <MdiButtons>
          <MdiButton aria-label="minimize"><svg width="5" height="6"><path d="M0 5h5" stroke="#334" strokeWidth="1.500" /></svg></MdiButton>
          <MdiButton aria-label="restore"><svg width="7" height="7" fill="none" stroke="#556"><path d="M2.500 2.500v-2h4v3h-2M.5 2.500h4v4h-4z" /></svg></MdiButton>
          <MdiButton aria-label="close"><svg width="6" height="6"><path d="M0 0l6 6M6 0L0 6" stroke="#334" strokeWidth="1.300" /></svg></MdiButton>
        </MdiButtons>
      </MenuBar>
      <Toolbars />
      <Main>
        <Properties />
        <TArch />
        <Drawing />
      </Main>
      <StatusBar>
        <ScaleButton>比例 1:100<Down color="#111" /></ScaleButton>
        <Coords>394.3076, 200.2138, 0.0000</Coords>
        {toggles.map(name => <Toggle key={name} $mono={/^D/.test(name)}>{name}</Toggle>)}
        <Tray><Icon name="comm" size={13} /><Icon name="trayLock" size={13} /></Tray>
      </StatusBar>
      <Ears width="30" height="7" aria-hidden="true"><ellipse cx="6.500" cy="7" rx="6" ry="7" fill="#c4c4c4" /><ellipse cx="22.500" cy="8" rx="6" ry="7" fill="#c4c4c4" /></Ears>
      <Watermark>
        <svg width="36" height="36" viewBox="0 0 36 36" fill="none" stroke="#c6cad6" strokeWidth="3" strokeLinecap="round" strokeLinejoin="round" aria-hidden="true">
          <path d="M3 6v19c0 9 4 11 11 7l15-8c6-4 6-8 0-12L15 3c-4-2-6-1-6 3v18c0 3 2 4 4 3" />
          <path d="M15 13l6 4.500-6 4.500z" fill="#c6cad6" strokeWidth="1" /><path d="M24 14v7" strokeWidth="2" />
        </svg>
        <WatermarkText>
          <WatermarkName>溜溜自学</WatermarkName>
          <WatermarkUrl>zixue.3D66.COM</WatermarkUrl>
        </WatermarkText>
      </Watermark>
      <GreenBall />
      <Percent>72%</Percent>
    </Window>
  )
}
